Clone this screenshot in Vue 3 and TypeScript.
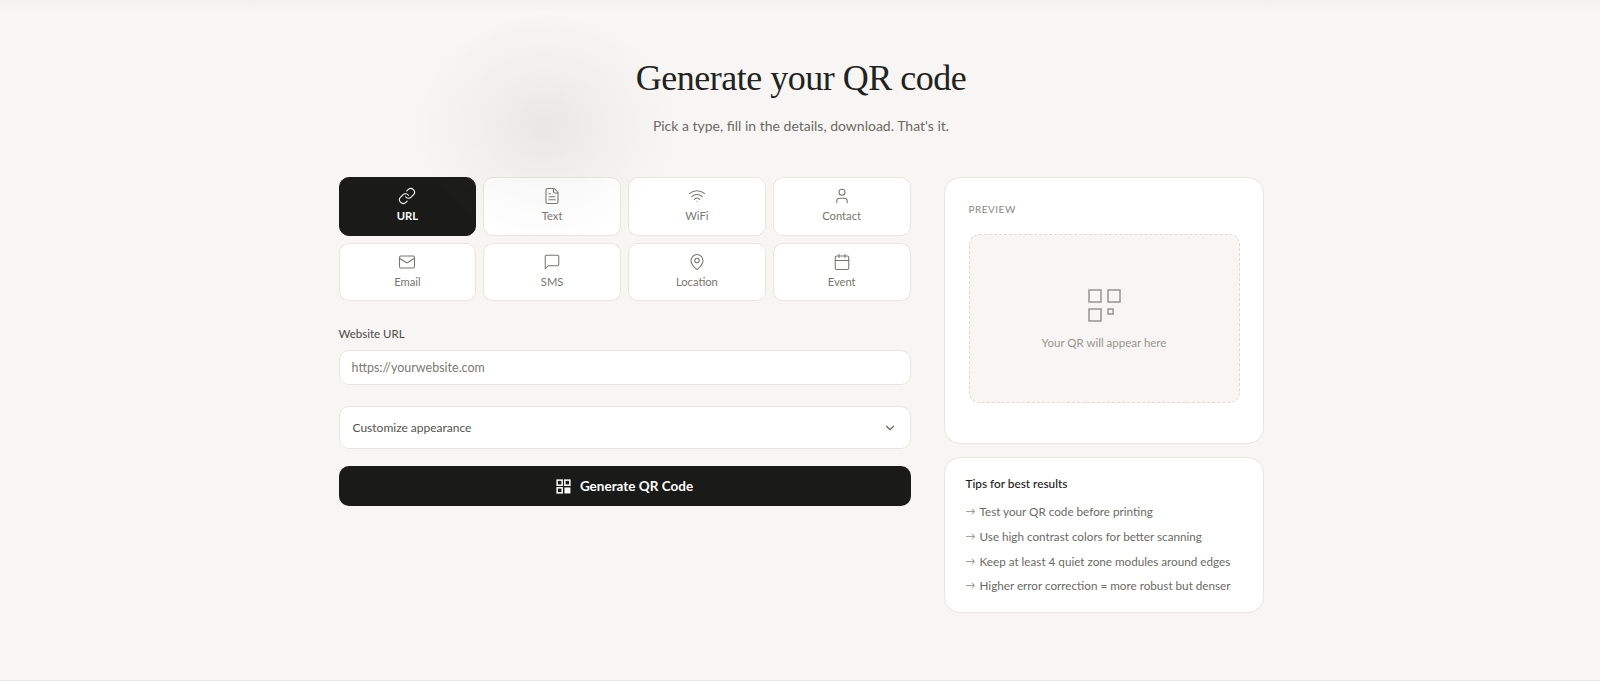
<script setup lang="ts">
interface Tab { label: string; paths: string[] }
const tabs: Tab[] = [
  { label: 'URL', paths: ['M10 13a5 5 0 0 0 7.54.54l3-3a5 5 0 0 0-7.07-7.07l-1.72 1.71', 'M14 11a5 5 0 0 0-7.54-.54l-3 3a5 5 0 0 0 7.07 7.07l1.71-1.71'] },
  { label: 'Text', paths: ['M15 2H6a2 2 0 0 0-2 2v16a2 2 0 0 0 2 2h12a2 2 0 0 0 2-2V7Z', 'M14 2v4a2 2 0 0 0 2 2h4', 'M16 13H8', 'M16 17H8', 'M10 9H8'] },
  { label: 'WiFi', paths: ['M12 19h.01', 'M2 8.82a15 15 0 0 1 20 0', 'M5 12.86a10 10 0 0 1 14 0', 'M8.5 16.43a5 5 0 0 1 7 0'] },
  { label: 'Contact', paths: ['M19 21v-2a4 4 0 0 0-4-4H9a4 4 0 0 0-4 4v2', 'M12 11a4 4 0 1 0 0-8 4 4 0 0 0 0 8Z'] },
  { label: 'Email', paths: ['M4 4h16a2 2 0 0 1 2 2v12a2 2 0 0 1-2 2H4a2 2 0 0 1-2-2V6a2 2 0 0 1 2-2Z', 'm22 7-8.97 5.7a1.94 1.94 0 0 1-2.06 0L2 7'] },
  { label: 'SMS', paths: ['M21 15a2 2 0 0 1-2 2H7l-4 4V5a2 2 0 0 1 2-2h14a2 2 0 0 1 2 2Z'] },
  { label: 'Location', paths: ['M20 10c0 4.99-5.54 10.19-7.4 11.8a1 1 0 0 1-1.2 0C9.54 20.19 4 14.99 4 10a8 8 0 0 1 16 0', 'M12 13a3 3 0 1 0 0-6 3 3 0 0 0 0 6Z'] },
  { label: 'Event', paths: ['M8 2v4', 'M16 2v4', 'M5 4h14a2 2 0 0 1 2 2v14a2 2 0 0 1-2 2H5a2 2 0 0 1-2-2V6a2 2 0 0 1 2-2Z', 'M3 10h18'] },
]
const tips: string[] = [
  'Test your QR code before printing',
  'Use high contrast colors for better scanning',
  'Keep at least 4 quiet zone modules around edges',
  'Higher error correction = more robust but denser',
]
</script>

<template>
  <div class="page">
    <div class="blob"></div>
    <header class="head">
      <h1>Generate your QR code</h1>
      <p>Pick a type, fill in the details, download. That's it.</p>
    </header>
    <main class="layout">
      <section class="left">
        <div class="tabs">
          <button v-for="(t, i) in tabs" :key="t.label" class="tab" :class="{ active: i === 0 }">
            <svg viewBox="0 0 24 24" width="18" height="18" fill="none" stroke="currentColor" stroke-width="1.4" stroke-linecap="round" stroke-linejoin="round">
              <path v-for="p in t.paths" :key="p" :d="p" />
            </svg>
            <span>{{ t.label }}</span>
          </button>
        </div>
        <label class="field-label">Website URL</label>
        <div class="input"><span>https://yourwebsite.com</span></div>
        <div class="custom">
          <span>Customize appearance</span>
          <svg viewBox="0 0 24 24" width="14" height="14" fill="none" stroke="currentColor" stroke-width="2" stroke-linecap="round" stroke-linejoin="round"><path d="m6 9 6 6 6-6" /></svg>
        </div>
        <button class="generate">
          <svg viewBox="0 0 16 16" width="15" height="15" fill="none" stroke="currentColor" stroke-width="1.6">
            <rect x="1.2" y="1.2" width="5.4" height="5.4" />
            <rect x="9.4" y="1.2" width="5.4" height="5.4" />
            <rect x="1.2" y="9.4" width="5.4" height="5.4" />
            <rect x="9" y="9" width="6.4" height="6.4" fill="currentColor" stroke="none" />
          </svg>
          <span>Generate QR Code</span>
        </button>
      </section>
      <aside class="right">
        <div class="card preview">
          <div class="eyebrow">PREVIEW</div>
          <div class="drop">
            <svg viewBox="0 0 33 33" width="33" height="33" fill="none" stroke="currentColor" stroke-width="1.5">
              <rect x="1" y="1" width="12" height="12" />
              <rect x="20" y="1" width="12" height="12" />
              <rect x="1" y="20" width="12" height="12" />
              <rect x="20" y="20" width="5" height="5" />
            </svg>
            <span>Your QR will appear here</span>
          </div>
        </div>
        <div class="card tips">
          <h2>Tips for best results</h2>
          <ul>
            <li v-for="t in tips" :key="t"><span class="arrow">→</span><span>{{ t }}</span></li>
          </ul>
        </div>
      </aside>
    </main>
  </div>
</template>

<style>
html, body { margin: 0; background: #f7f6f4; }
</style>

<style scoped>
.page {
  position: relative;
  height: 681px;
  box-sizing: border-box;
  overflow: hidden;
  padding: 56px 0 0 2px;
  background: #f7f6f4;
  border-bottom: 1px solid #e9e7e2;
  font-family: "Lato", "Liberation Sans", sans-serif;
  color: #1a1a18;
}
.page::before {
  content: "";
  position: absolute;
  inset: 0 0 auto 0;
  height: 12px;
  background: linear-gradient(#f2f1ee, #f7f6f4);
}
.blob {
  position: absolute;
  left: 415px;
  top: 12px;
  width: 260px;
  height: 230px;
  background: radial-gradient(closest-side, rgba(110, 108, 100, 0.11), rgba(110, 108, 100, 0.05) 45%, rgba(110, 108, 100, 0));
  pointer-events: none;
  z-index: 2;
}
.head { text-align: center; }
h1 {
  margin: 0;
  font-family: "Liberation Serif", serif;
  font-weight: 400;
  font-size: 36px;
  line-height: 44px;
  letter-spacing: -0.5px;
  color: #222220;
}
.head p {
  margin: 16px 0 0;
  font-size: 14px;
  line-height: 20px;
  color: #6b6a65;
}
.layout {
  width: 925px;
  margin: 41px auto 0;
  display: grid;
  grid-template-columns: 572px 320px;
  gap: 33px;
  align-items: start;
}
.left { display: flex; flex-direction: column; }
.tabs { display: grid; grid-template-columns: repeat(4, 1fr); gap: 7px; }
.tab {
  height: 58.5px;
  box-sizing: border-box;
  display: flex;
  flex-direction: column;
  align-items: center;
  justify-content: center;
  gap: 3px;
  padding: 0 0 1px;
  background: #fff;
  border: 1px solid #e8e6e1;
  border-radius: 10px;
  color: #77766f;
  font: 400 11.2px/16px "Lato", "Liberation Sans", sans-serif;
}
.tab.active {
  background: #1a1a18;
  border-color: #1a1a18;
  color: #fff;
  font-weight: 700;
}
.field-label {
  margin-top: 25px;
  font-size: 11.5px;
  line-height: 16px;
  color: #4a4945;
}
.input {
  margin-top: 8px;
  height: 35px;
  box-sizing: border-box;
  display: flex;
  align-items: center;
  padding: 0 12px;
  background: #fff;
  border: 1px solid #e8e6e1;
  border-radius: 10px;
  font-size: 12.5px;
  color: #7b7a73;
}
.custom {
  margin-top: 21px;
  height: 43px;
  box-sizing: border-box;
  display: flex;
  align-items: center;
  justify-content: space-between;
  padding: 0 13px;
  background: #fff;
  border: 1px solid #e8e6e1;
  border-radius: 10px;
  font-size: 12px;
  color: #55544f;
}
.custom svg { color: #6b6a65; }
.generate {
  margin-top: 17px;
  height: 40px;
  display: flex;
  align-items: center;
  justify-content: center;
  gap: 9px;
  padding: 0;
  border: 0;
  border-radius: 10px;
  background: #1a1a18;
  color: #fff;
  font: 700 13.5px/20px "Lato", "Liberation Sans", sans-serif;
}
.right { display: flex; flex-direction: column; gap: 13px; }
.card {
  box-sizing: border-box;
  background: #fff;
  border: 1px solid #e8e6e1;
  border-radius: 16px;
}
.preview { padding: 24px 23px 40px 24px; height: 267px; }
.eyebrow {
  font-size: 10px;
  line-height: 14px;
  letter-spacing: 0.05em;
  color: #8a8983;
}
.drop {
  margin-top: 18px;
  height: 169px;
  box-sizing: border-box;
  display: flex;
  flex-direction: column;
  align-items: center;
  justify-content: center;
  gap: 13px;
  padding-top: 2px;
  background: #f7f6f4;
  border: 1px dashed #dedcd6;
  border-radius: 10px;
  color: #96958f;
  font-size: 11.5px;
  line-height: 16px;
}
.tips { padding: 18px 20px 16px 21px; height: 156px; }
.tips h2 {
  margin: 0;
  font-size: 11.8px;
  line-height: 16px;
  font-weight: 500;
  color: #1a1a18;
}
.tips ul {
  list-style: none;
  margin: 7px 0 0;
  padding: 0;
  display: flex;
  flex-direction: column;
}
.tips li {
  display: flex;
  gap: 4px;
  height: 24.7px;
  align-items: center;
  font-size: 11.7px;
  color: #6b6a65;
  white-space: nowrap;
}
.arrow { width: 10px; color: #8f8e88; font-size: 10px; }
</style>
